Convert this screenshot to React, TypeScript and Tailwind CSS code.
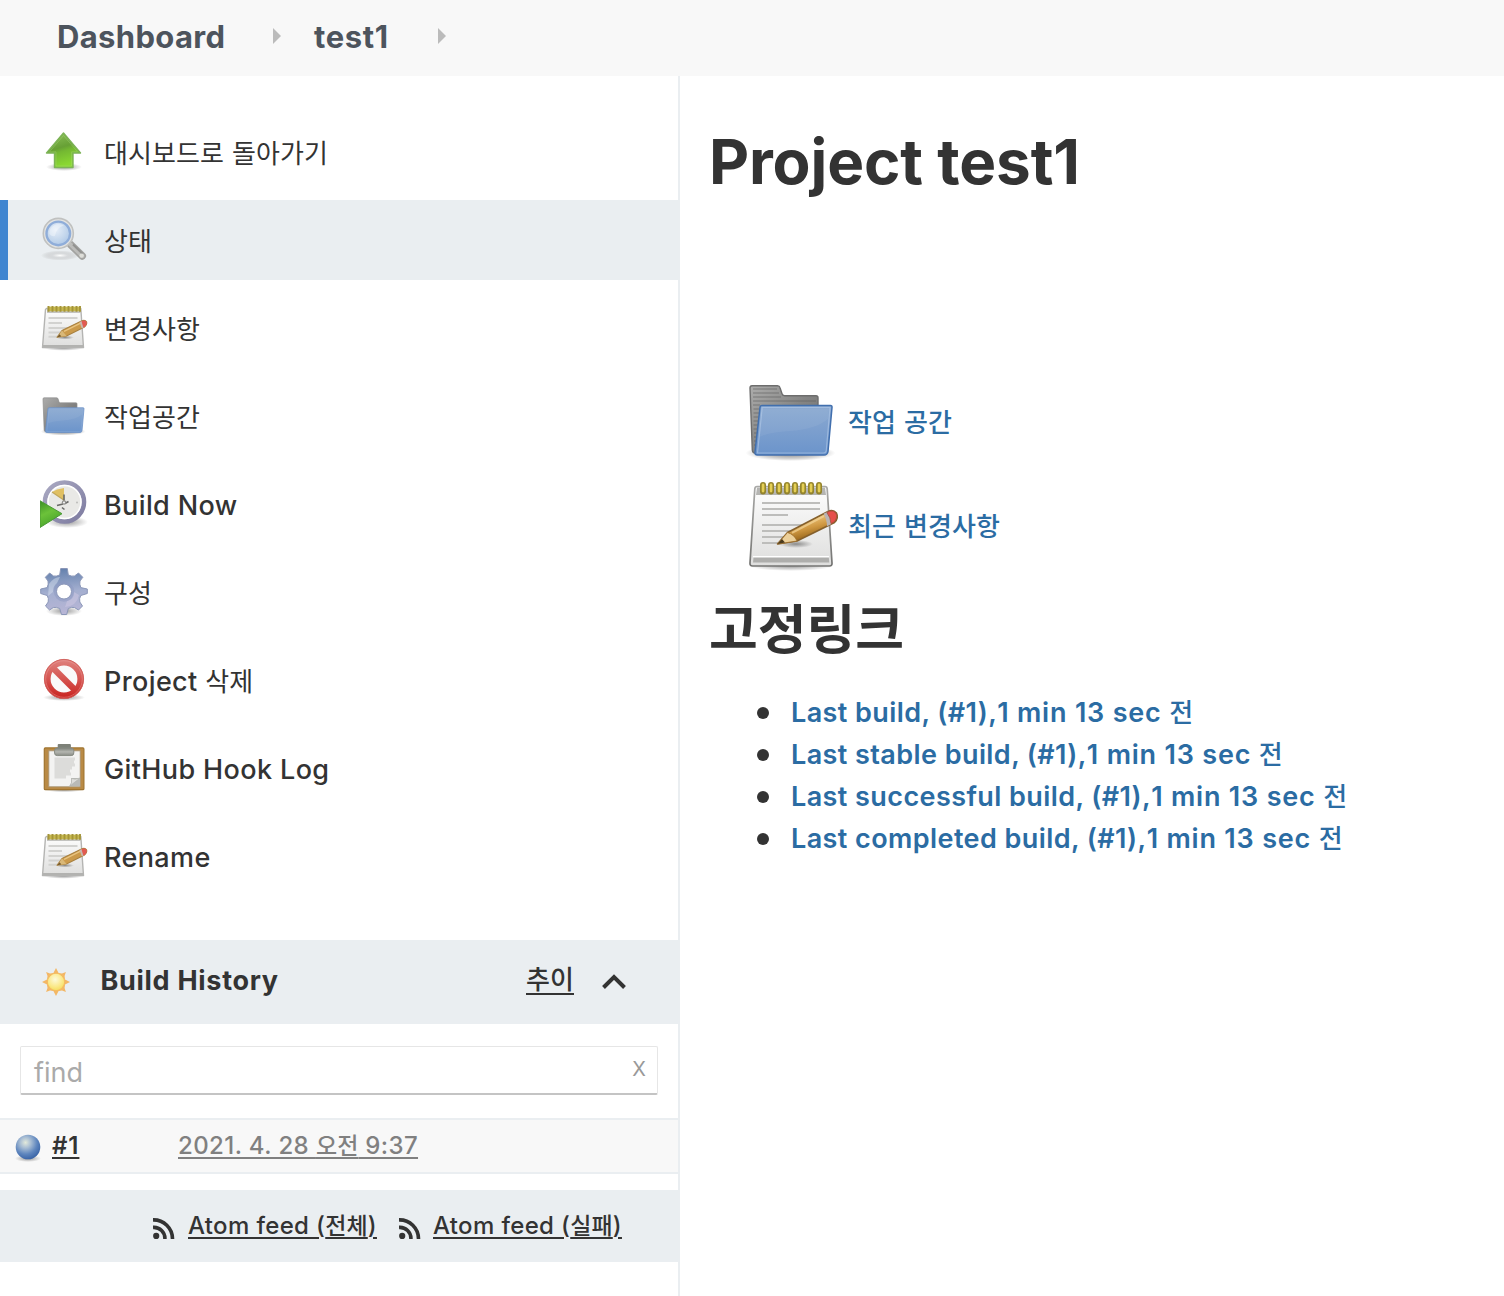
import React from "react";

/** Renders a label, setting Hangul runs in their own face and size. */
function Label({ text, ko }: { text: string; ko: string }) {
  const parts = text.split(/([\uAC00-\uD7A3]+(?: [\uAC00-\uD7A3]+)*)/);
  return (
    <>
      {parts.map((p, i) =>
        i % 2 === 1 ? (
          <span key={i} className={`font-['Noto_Sans_CJK_KR'] tracking-[0.1px] [word-spacing:2px] ${ko}`}>
            {p}
          </span>
        ) : (
          p
        )
      )}
    </>
  );
}

function UpIcon() {
  return (
    <svg viewBox="0 0 48 48" className="size-12 shrink-0">
      <defs>
        <linearGradient id="upg" x1="0" y1="0" x2="0.3" y2="1">
          <stop offset="0" stopColor="#8fc45c" />
          <stop offset="0.5" stopColor="#67a035" />
          <stop offset="0.62" stopColor="#74b832" />
          <stop offset="1" stopColor="#8ad832" />
        </linearGradient>
        <radialGradient id="shadow">
          <stop offset="0" stopColor="#000" stopOpacity="0.4" />
          <stop offset="1" stopColor="#000" stopOpacity="0" />
        </radialGradient>
      </defs>
      <ellipse cx="24" cy="39" rx="18" ry="4" fill="url(#shadow)" />
      <path d="M23.5 5 L40.5 25 H33 V39.5 H14.5 V25 H6.5 Z" fill="url(#upg)" stroke="#7cb356" strokeWidth="1.4" strokeLinejoin="round" />
      <path d="M23.5 7.5 L37.5 23.8 H31.6 V38 H16 V23.8 H9.5 Z" fill="none" stroke="#b5dd8a" strokeOpacity="0.3" strokeWidth="1" />
    </svg>
  );
}

function SearchIcon() {
  return (
    <svg viewBox="0 0 48 48" className="size-12 shrink-0">
      <defs>
        <radialGradient id="lens" cx="0.4" cy="0.35" r="0.75">
          <stop offset="0" stopColor="#e6eef8" />
          <stop offset="0.6" stopColor="#c3d6ec" />
          <stop offset="1" stopColor="#a9c4e6" />
        </radialGradient>
        <radialGradient id="searchShadow">
          <stop offset="0" stopColor="#fff" stopOpacity="0.9" />
          <stop offset="0.4" stopColor="#d3d5d7" stopOpacity="0.8" />
          <stop offset="1" stopColor="#aaa" stopOpacity="0" />
        </radialGradient>
      </defs>
      <ellipse cx="20" cy="39.5" rx="19" ry="5" fill="url(#searchShadow)" />
      <path d="M30.5 28.5 L42.3 40" stroke="#a3a3a1" strokeWidth="7.4" strokeLinecap="round" />
      <path d="M30.5 28.5 L42.3 40" stroke="#bcbcba" strokeWidth="4" strokeLinecap="round" />
      <path d="M33 28.5 L42.5 37.8" stroke="#929290" strokeWidth="2" />
      <circle cx="41.6" cy="39.6" r="2.2" fill="#deded9" />
      <circle cx="18.3" cy="17.4" r="15" fill="#e3e3e1" stroke="#c0c1c0" strokeWidth="1.6" />
      <circle cx="18.3" cy="17.4" r="11.8" fill="url(#lens)" stroke="#8fadd9" strokeWidth="2.4" />
      <path d="M9.3 18 A9.5 9.5 0 0 1 24 9.6 Q16 12 15 20 Q12 21 9.3 18Z" fill="#fff" opacity="0.35" />
    </svg>
  );
}

function NotepadIcon() {
  return (
    <svg viewBox="0 0 96 96" className="size-24 shrink-0">
      <defs>
        <linearGradient id="paper" x1="0" y1="0" x2="0" y2="1">
          <stop offset="0" stopColor="#fefefe" />
          <stop offset="1" stopColor="#dededd" />
        </linearGradient>
        <linearGradient id="padEdge" x1="0" y1="0" x2="0" y2="1">
          <stop offset="0" stopColor="#a9a9a7" />
          <stop offset="1" stopColor="#747472" />
        </linearGradient>
        <linearGradient id="pencil" x1="0.4" y1="0.3" x2="0.6" y2="0.75">
          <stop offset="0" stopColor="#e8bd72" />
          <stop offset="0.5" stopColor="#cf9842" />
          <stop offset="1" stopColor="#a06d20" />
        </linearGradient>
        <radialGradient id="padShadow">
          <stop offset="0" stopColor="#000" stopOpacity="0.4" />
          <stop offset="1" stopColor="#000" stopOpacity="0" />
        </radialGradient>
      </defs>
      <ellipse cx="47" cy="88" rx="42" ry="5" fill="url(#padShadow)" />
      <path d="M13 8.5 H81 Q83 8.5 83.2 11 L88 85 Q88.2 88 85.5 88 H8.5 Q5.8 88 6 85 L10.8 11 Q11 8.5 13 8.5Z" fill="url(#paper)" stroke="url(#padEdge)" strokeWidth="1.7" />
      <path d="M13 9.5 H81 L82 17 H12Z" fill="#b5b5b2" />
      <path d="M9.5 79.5 H84.8 L85.3 84.6 H9Z" fill="#aeaeac" />
      <path d="M9 78.6 H85" stroke="#fff" strokeWidth="1.2" />
      {[19, 27, 35, 43, 51, 59, 67, 75].map((x) => (
        <g key={x}>
          <rect x={x - 3} y="4" width="6" height="12.5" rx="3" fill="#94842c" />
          <rect x={x - 1.3} y="5.4" width="2.7" height="9" rx="1.3" fill="#e5cf55" />
        </g>
      ))}
      <path d="M18 25H76M18 31H76M18 37H44M18 47H76M18 53H58M18 59H50M18 65H36" stroke="#bdbdbb" strokeWidth="1.9" />
      <ellipse cx="52" cy="66" rx="17" ry="4" fill="url(#padShadow)" />
      <path d="M33.5 66 L43.5 54.5 L84 33.5 Q89 31 92.5 35 Q95 40 90.5 44.5 L53 63 Z" fill="url(#pencil)" stroke="#85602c" strokeWidth="1.5" strokeLinejoin="round" />
      <path d="M33.5 66 L43.5 54.5 Q50.5 56.5 53 63Z" fill="#ecd09a" stroke="#9a6b28" strokeWidth="0.8" />
      <path d="M33.5 66 L38 61 L41 64.5Z" fill="#4b3a1c" />
      <path d="M48 54.8 L80 38" stroke="#f3d598" strokeWidth="2" opacity="0.7" />
      <path d="M79.5 35.8 L84 33.5 Q87.5 39 87.5 46 L83 48.2 Q82.8 41 79.5 35.8Z" fill="#b9b4b4" />
      <path d="M82.8 34.5 L85.5 33.2 Q89.5 31.8 92 35.2 Q94 40 89.8 44.2 L87 45.6 Q86.8 39.5 82.8 34.5Z" fill="#e6504a" stroke="#a34a38" strokeWidth="0.8" />
    </svg>
  );
}

function SmallNotepadIcon() {
  return (
    <svg viewBox="0 0 48 48" className="size-12 shrink-0">
      <defs>
        <linearGradient id="smallPaper" x1="0" y1="0" x2="0" y2="1">
          <stop offset="0" stopColor="#fdfdfd" />
          <stop offset="1" stopColor="#dededd" />
        </linearGradient>
      </defs>
      <ellipse cx="23.5" cy="44" rx="20" ry="2.8" fill="url(#shadow)" />
      <path d="M6.5 4.5 H40.8 L43.5 43.5 H2.5 L5.5 5.5Z" fill="url(#smallPaper)" stroke="#b4b4b2" strokeWidth="1.4" strokeLinejoin="round" />
      <path d="M3 42H43.3" stroke="#b2b2b0" strokeWidth="2" />
      <rect x="7" y="4.5" width="34" height="4.5" fill="#c3c3c0" />
      <rect x="7.8" y="2.6" width="32.8" height="4.6" fill="#c7b94e" />
      <path d="M8.5 2V7.8M12.5 2V7.8M16.5 2V7.8M20.5 2V7.8M24.5 2V7.8M28.5 2V7.8M32.5 2V7.8M36.5 2V7.8M40 2V7.8" stroke="#a4943a" strokeWidth="1.9" />
      <path d="M8.5 14H37.5M8.5 19H22M8.5 24H30M8.5 28.5H24M8.5 32.7H18" stroke="#d2d2d0" strokeWidth="1.9" />
      <ellipse cx="25" cy="33.5" rx="9" ry="2" fill="url(#shadow)" />
      <path d="M17 33.3 L22 26.5 L41.5 17 Q45 15.5 46.5 17.8 Q47.5 20.5 44.5 23 L26.5 32Z" fill="#cb9a4b" stroke="#a9803f" strokeWidth="1.1" strokeLinejoin="round" />
      <path d="M17 33.3 L22 26.5 L26.5 32Z" fill="#d9b878" />
      <path d="M17 33.3 L19.5 30.3 L21.4 32.6Z" fill="#75582b" />
      <path d="M24 27.3 L40.5 19.2" stroke="#e9c481" strokeWidth="1.5" />
      <path d="M39.5 18 L41.8 16.9 L43.8 23.4 L41.8 24.4Z" fill="#c7b8b0" />
      <path d="M41.5 17 Q45 15.5 46.5 17.8 Q47.5 20.5 44.5 23 L43.3 23.5Z" fill="#e25a52" />
    </svg>
  );
}

function FolderIcon({ className, small = false }: { className: string; small?: boolean }) {
  return (
    <svg viewBox="0 0 96 96" className={`shrink-0 ${className}`}>
      <defs>
        <linearGradient id="folderBack" x1="0" y1="0" x2="1" y2="1">
          <stop offset="0" stopColor="#adadac" />
          <stop offset="0.5" stopColor="#858584" />
          <stop offset="1" stopColor="#6a6a6a" />
        </linearGradient>
        <linearGradient id="folderFront" x1="0" y1="0" x2="0" y2="1">
          <stop offset="0" stopColor="#8aa9d1" />
          <stop offset="0.5" stopColor="#7c9fce" />
          <stop offset="1" stopColor="#6b94cb" />
        </linearGradient>
        <radialGradient id="folderShadow">
          <stop offset="0" stopColor="#000" stopOpacity="0.5" />
          <stop offset="0.7" stopColor="#000" stopOpacity="0.18" />
          <stop offset="1" stopColor="#000" stopOpacity="0" />
        </radialGradient>
      </defs>
      <ellipse cx="46.5" cy="79" rx="45" ry="8" fill="url(#folderShadow)" />
      <path
        d="M8 11.7 H33.5 Q35.5 11.7 36 13.7 L38 19.7 Q38.500 21.700 40.500 21.700 H72 Q74 21.700 74 23.700 V77 Q74 79 70 79 H11 Q8.500 79 8.300 76 L6 14 Q6 11.700 8 11.700Z"
        fill="url(#folderBack)"
        stroke={small ? "#8e8e8d" : "#6d6d6d"}
        strokeWidth="1.4"
      />
      {!small && (
        <path d="M9 15H33M9 19H35M9 23H37M9 27H72M9 31H16M9.5 35H15.500M9.500 39H15M9.500 43H15M9.500 47H14.500M9.500 51H14.500M9.500 55H14M10 59H13.500M10 63H13M10 67H13M10 71H13" stroke="#5e5e5e" strokeWidth="1.3" opacity="0.4" />
      )}
      <path
        d="M18 31.500 H86.500 Q88.200 31.500 88 33.500 L84 77.500 Q83.500 81 80 81 H13.500 Q10.500 81 11 78 L16 33.500 Q16.200 31.500 18 31.500Z"
        fill="url(#folderFront)"
        stroke={small ? "#6b92c8" : "#416fae"}
        strokeWidth="1.5"
      />
      <path d="M18.200 33.500 H86 L82.300 76.500 Q82 79 79.500 79 H13.500Z" fill="none" stroke="#b3cae8" strokeWidth="1.2" opacity={small ? 0.3 : 0.6} />
      <path d="M17.500 34.500 H85 L84 45 Q72 55 46 57 Q25 58 15.500 63Z" fill="#fff" opacity="0.06" />
    </svg>
  );
}

function BuildNowIcon() {
  return (
    <svg viewBox="0 0 48 48" className="size-12 shrink-0">
      <defs>
        <linearGradient id="play" x1="0" y1="0" x2="0.4" y2="1">
          <stop offset="0" stopColor="#3a8f23" />
          <stop offset="0.5" stopColor="#6cc23a" />
          <stop offset="1" stopColor="#48a32a" />
        </linearGradient>
        <linearGradient id="bezel" x1="0" y1="0" x2="1" y2="1">
          <stop offset="0" stopColor="#aaa9c2" />
          <stop offset="1" stopColor="#7d7ba0" />
        </linearGradient>
      </defs>
      <ellipse cx="27" cy="42" rx="21" ry="6" fill="url(#shadow)" />
      <circle cx="24.5" cy="22" r="19.5" fill="#e9e9e6" stroke="url(#bezel)" strokeWidth="4.6" />
      <circle cx="24.5" cy="22" r="16.5" fill="none" stroke="#fff" strokeWidth="1.5" />
      <path d="M12 12 L17 9.5 L24 8 V20.5Z" fill="#e0c063" />
      <path d="M12 12 L24.5 20.5" stroke="#c1a75c" strokeWidth="1.2" />
      <path d="M24 14.5 V20.5 M25 23.5 L28.5 21.5 M17 25.5 L23 24 M22 27.5 L24.5 29.5" fill="none" stroke="#6a6a68" strokeWidth="1.6" />
      <circle cx="24" cy="22.5" r="2.2" fill="#8f8f8c" />
      <circle cx="24" cy="22.5" r="1.1" fill="#eee" />
      <circle cx="37" cy="22.5" r="0.9" fill="#b8b8b6" />
      <path d="M0 20.8 L22 33.7 L0 47.5Z" fill="url(#play)" stroke="#4a9a35" strokeWidth="1" />
    </svg>
  );
}

function GearIcon() {
  return (
    <svg viewBox="0 0 48 48" className="size-12 shrink-0">
      <defs>
        <linearGradient id="gear" x1="0.5" y1="0" x2="0.6" y2="1">
          <stop offset="0" stopColor="#6481ad" />
          <stop offset="0.5" stopColor="#a4afd0" />
          <stop offset="1" stopColor="#b9b6d6" />
        </linearGradient>
      </defs>
      <ellipse cx="24" cy="43" rx="18" ry="5" fill="url(#shadow)" />
      <path
        fillRule="evenodd"
        d="M20.7 0.5 H27.3 L28.3 7 Q31.5 8.6 34.5 8 L38.5 5 L42.8 9.3 L40 13 Q39.2 16 40.8 19.6 L47.3 21 V25.5 L40.8 27.5 Q39 30.5 39.8 34 L42.5 38 L38.5 42 L34.5 39.5 Q31.5 38.8 28.3 40.5 L26.7 46.5 H21.5 L19.7 40.5 Q16.5 38.8 13.3 39.5 L9.6 42 L5.5 38 L8.2 34 Q9 30.5 7.2 27.5 L0.7 25.5 V21 L7.2 19.6 Q8.8 16 8 13 L5.3 9.3 L9.6 5 L13.5 8 Q16.5 8.6 19.7 7Z M24 16 A7.5 7.5 0 1 0 24 31 A7.5 7.5 0 1 0 24 16Z"
        fill="url(#gear)"
        stroke="#8b97b8"
        strokeWidth="1"
        strokeLinejoin="round"
      />
      <circle cx="24" cy="23.5" r="9" fill="none" stroke="#8793bd" strokeWidth="2.4" opacity="0.4" />
      <path d="M9 16 Q14 9 20 9 L17 15 Q13 18 13 24 L8 28Z" fill="#dce4f2" opacity="0.45" />
      <path d="M25 39 Q37 38 39 27 L34 24 Q34 32 27 33Z" fill="#d9cfe8" opacity="0.4" />
    </svg>
  );
}

function DeleteIcon() {
  return (
    <svg viewBox="0 0 48 48" className="size-12 shrink-0">
      <defs>
        <linearGradient id="stop" gradientUnits="userSpaceOnUse" x1="0" y1="3" x2="0" y2="44">
          <stop offset="0" stopColor="#df8480" />
          <stop offset="0.5" stopColor="#d5534f" />
          <stop offset="1" stopColor="#c8201c" />
        </linearGradient>
      </defs>
      <ellipse cx="24" cy="41.5" rx="21" ry="3.5" fill="url(#shadow)" />
      <circle cx="24" cy="23" r="16.6" fill="#fafafa" stroke="url(#stop)" strokeWidth="6.4" />
      <path d="M12.5 11.5 L35.5 34.5" stroke="url(#stop)" strokeWidth="6.4" />
      <circle cx="24" cy="23" r="19.6" fill="none" stroke="#cf5c58" strokeWidth="0.9" />
      <circle cx="24" cy="23" r="18.3" fill="none" stroke="#f0a6a2" strokeWidth="0.8" opacity="0.5" />
    </svg>
  );
}

function ClipboardIcon() {
  return (
    <svg viewBox="0 0 48 48" className="size-12 shrink-0">
      <defs>
        <linearGradient id="clip" x1="0" y1="0" x2="0" y2="1">
          <stop offset="0" stopColor="#7f837b" />
          <stop offset="0.5" stopColor="#b4b6b0" />
          <stop offset="1" stopColor="#898c85" />
        </linearGradient>
      </defs>
      <ellipse cx="24" cy="46" rx="20" ry="2.2" fill="url(#shadow)" />
      <rect x="4.3" y="3.9" width="39.6" height="41.8" rx="1" fill="#b98a45" stroke="#a0742f" strokeWidth="1.2" />
      <rect x="8.8" y="6.8" width="31.4" height="36" fill="#f3f3f2" stroke="#a89474" strokeWidth="0.9" />
      <path d="M14.5 15H35M14.5 18H34M14.5 21H35M14.5 24H32M14.5 27H30M14.5 30H31M14.5 33H26" stroke="#dcdcda" strokeWidth="2.9" />
      <path d="M40 34 H31 Q32 39 29.5 42.3 H40Z" fill="#b9bab7" />
      <path d="M40 34 Q35 36 31.5 34.5 Q32.5 39 29.5 42.3Z" fill="#dededc" stroke="#b0b1ad" strokeWidth="0.6" />
      <rect x="17.7" y="0" width="13.2" height="7" rx="1" fill="#7d8178" />
      <rect x="14.6" y="4" width="19.2" height="7.6" rx="2.6" fill="url(#clip)" stroke="#868a82" strokeWidth="1" />
    </svg>
  );
}

function SunIcon() {
  return (
    <svg viewBox="0 0 32 32" className="size-8 shrink-0">
      <defs>
        <radialGradient id="sun" cx="0.45" cy="0.35" r="0.7">
          <stop offset="0" stopColor="#fdfadb" />
          <stop offset="0.6" stopColor="#fbe98a" />
          <stop offset="1" stopColor="#f5db55" />
        </radialGradient>
      </defs>
      <path
        d="M16 2 L18.6 7 L22 7.5 L25.9 6.1 L24.6 10 L25 13.4 L30 16 L25 18.6 L24.6 22 L25.9 25.9 L22 24.6 L18.6 25 L16 30 L13.4 25 L10 24.6 L6.1 25.9 L7.5 22 L7 18.6 L2 16 L7 13.4 L7.5 10 L6.1 6.1 L10 7.5 L13.4 7Z"
        fill="#f3b766"
      />
      <circle cx="16" cy="16" r="8.7" fill="url(#sun)" stroke="#f4bb62" strokeWidth="1.1" />
    </svg>
  );
}

function BallIcon() {
  return (
    <svg viewBox="0 0 32 32" className="size-8 shrink-0">
      <defs>
        <radialGradient id="ball" cx="0.4" cy="0.32" r="0.72">
          <stop offset="0" stopColor="#e3eadb" />
          <stop offset="0.3" stopColor="#a9bed4" />
          <stop offset="0.65" stopColor="#5f86be" />
          <stop offset="1" stopColor="#3560a4" />
        </radialGradient>
      </defs>
      <ellipse cx="16" cy="27.5" rx="13" ry="3.5" fill="url(#shadow)" />
      <circle cx="16" cy="16" r="12.3" fill="url(#ball)" />
    </svg>
  );
}

function RssIcon() {
  return (
    <svg viewBox="0 0 22 22" className="size-[22px] shrink-0" fill="none" stroke="#333" strokeWidth="3.6">
      <circle cx="3.2" cy="17.9" r="3.1" fill="#333" stroke="none" />
      <path d="M0 9.4 A11 11 0 0 1 11.9 21" />
      <path d="M0 1.9 A19 19 0 0 1 19.5 21" />
    </svg>
  );
}

function Crumb() {
  return (
    <svg viewBox="0 0 8 16" className="h-4 w-2 shrink-0">
      <path d="M0 0 L8 8 L0 16Z" fill="#bbb" />
    </svg>
  );
}

const tasks: { text: string; icon: React.ReactNode; active?: boolean }[] = [
  { text: "대시보드로 돌아가기", icon: <UpIcon /> },
  { text: "상태", icon: <SearchIcon />, active: true },
  { text: "변경사항", icon: <SmallNotepadIcon /> },
  { text: "작업공간", icon: <FolderIcon className="size-12" small /> },
  { text: "Build Now", icon: <BuildNowIcon /> },
  { text: "구성", icon: <GearIcon /> },
  { text: "Project 삭제", icon: <DeleteIcon /> },
  { text: "GitHub Hook Log", icon: <ClipboardIcon /> },
  { text: "Rename", icon: <SmallNotepadIcon /> },
];

const permalinks = ["Last build", "Last stable build", "Last successful build", "Last completed build"];

export default function App() {
  return (
    <div className="flex h-[1296px] w-[1504px] flex-col overflow-hidden bg-white font-['Inter','Noto_Sans_CJK_KR',sans-serif] text-[#333]">
      <header className="flex h-[76px] shrink-0 items-center bg-[#f8f8f8] pb-1 pl-[57px] text-[31px] font-bold tracking-[0.35px] text-[#4d545d]">
        <span className="w-[216px] pt-0.5 whitespace-nowrap">Dashboard</span>
        <Crumb />
        <span className="ml-[33px] w-[124px] pt-0.5 tracking-[0.6px] whitespace-nowrap">test1</span>
        <Crumb />
      </header>
      <div className="flex min-h-0 flex-1">
        <aside className="flex w-[680px] shrink-0 flex-col border-r-2 border-[#eaeef1]">
          <nav className="flex flex-col gap-2 pt-9">
            {tasks.map((t) => {
              const latin = /^[A-Z]/.test(t.text);
              return (
                <a
                  key={t.text}
                  className={`flex h-20 items-center gap-4 border-l-8 pl-8 text-[27px] font-medium tracking-[0.38px] whitespace-nowrap ${
                    t.active ? "border-[#4085d0] bg-[#eaeef1]" : "border-transparent"
                  }`}
                >
                  {t.icon}
                  <span className={`leading-10 ${t.text === "Project 삭제" ? "pt-px" : latin ? "pt-[3px]" : "pt-px"}`}>
                    <Label text={t.text} ko="text-[26px] font-normal" />
                  </span>
                </a>
              );
            })}
          </nav>
          <section className="mt-11 flex h-[84px] items-center bg-[#eaeef1] pl-10 text-[27px]">
            <SunIcon />
            <span className="ml-[28.500px] w-[425.500px] pb-0.5 font-bold tracking-[0.7px] whitespace-nowrap">Build History</span>
            <span className="relative w-12 pb-[7px] leading-9 font-medium whitespace-nowrap">
              <Label text="추이" ko="text-[26px]" />
              <i className="absolute bottom-[10px] left-0 h-0.5 w-12 bg-[#333]" />
            </span>
            <svg viewBox="0 0 24 16" className="ml-7 h-4 w-6" fill="none" stroke="#333" strokeWidth="4">
              <path d="M1.5 13.5 L12 3 L22.5 13.5" />
            </svg>
          </section>
          <div className="mx-5 mt-[22px] flex h-[49px] items-center justify-between rounded-[2px] border border-b-2 border-[#e6e6e6] border-b-[#c4c4c4] pr-[11px] pl-[13px]">
            <span className="pt-[7px] text-[27px] text-[#aaa]">find</span>
            <span className="pb-[3px] text-[20px] text-[#999]">X</span>
          </div>
          <div className="mt-[23px] flex h-14 items-center border-y-2 border-[#eaeef1] bg-[#f8f8f8] pl-3 text-[24px] font-medium whitespace-nowrap">
            <span className="pt-0.5">
              <BallIcon />
            </span>
            <a className="ml-2 w-[126px] font-semibold tracking-[0.9px]">
              <span className="underline decoration-2 underline-offset-[3px]">#1</span>
            </a>
            <a className="pb-0.5 tracking-[0.4px] text-[#808080] underline decoration-2 underline-offset-[3px]">
              <Label text="2021. 4. 28 오전 9:37" ko="text-[23px]" />
            </a>
          </div>
          <div className="mt-4 flex h-[72px] items-center bg-[#eaeef1] pl-[153px] text-[24px] font-medium tracking-[0.35px] whitespace-nowrap">
            <span className="pt-1.5">
              <RssIcon />
            </span>
            <a className="ml-[13px] w-[211px] pb-0.5 underline decoration-2 underline-offset-[3px]">
              <Label text="Atom feed (전체)" ko="text-[23px]" />
            </a>
            <span className="pt-1.5">
              <RssIcon />
            </span>
            <a className="ml-3 pb-0.5 underline decoration-2 underline-offset-[3px]">
              <Label text="Atom feed (실패)" ko="text-[23px]" />
            </a>
          </div>
        </aside>
        <main className="flex flex-1 flex-col pl-[29px]">
          <h1 className="mt-[46px] text-[62px] leading-[80px] font-bold tracking-[-0.15px] whitespace-nowrap">Project test1</h1>
          <div className="mt-[172px] ml-[35px] flex flex-col gap-2 text-[26px] font-medium text-[#2b6ca3]">
            <a className="flex items-center gap-2">
              <FolderIcon className="size-24" />
              <span className="pb-px">
                <Label text="작업 공간" ko="" />
              </span>
            </a>
            <a className="flex items-center gap-2">
              <NotepadIcon />
              <span className="pb-px">
                <Label text="최근 변경사항" ko="" />
              </span>
            </a>
          </div>
          <h2 className="mt-3.5 font-['Noto_Sans_CJK_KR'] text-[53px] leading-[76px] font-bold">고정링크</h2>
          <ul className="mt-[27px] flex flex-col text-[27px] leading-[42px] font-semibold tracking-[0.42px] whitespace-nowrap text-[#2b6ca3]">
            {permalinks.map((p) => (
              <li key={p} className="flex h-[42px] items-center">
                <i className="mt-0.5 mr-[22px] ml-[48px] size-3 shrink-0 rounded-full bg-[#333]" />
                <span>
                  {p}, (#1),
                  <span className="tracking-[0.8px]">
                    <Label text="1 min 13 sec 전" ko="text-[26px] font-medium" />
                  </span>
                </span>
              </li>
            ))}
          </ul>
        </main>
      </div>
    </div>
  );
}
